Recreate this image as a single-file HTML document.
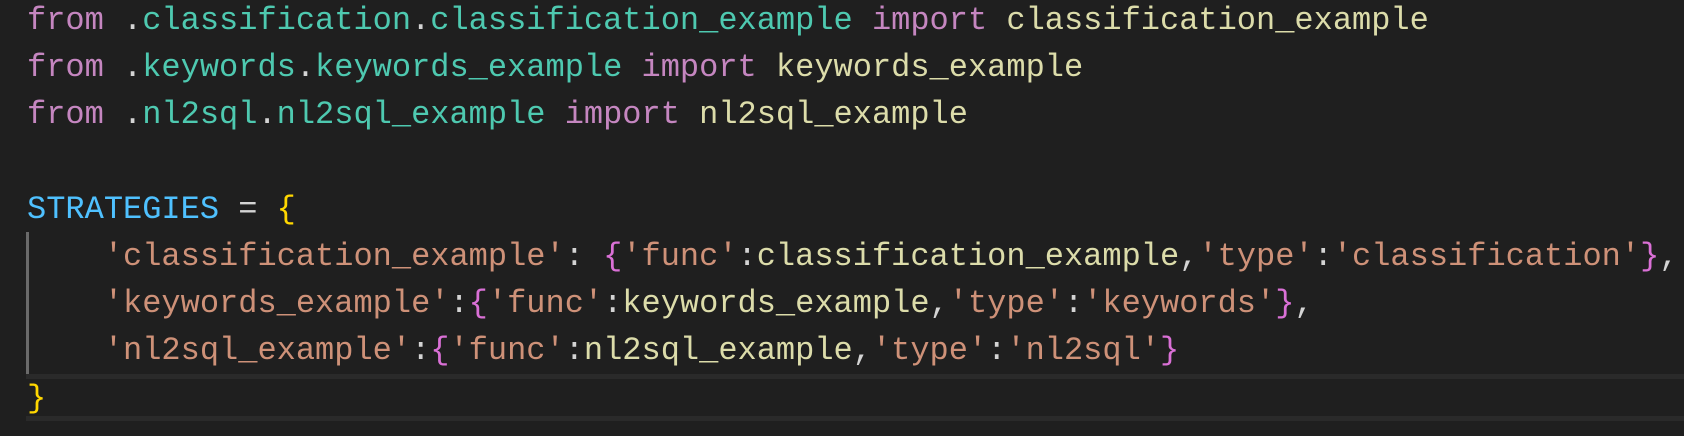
<!DOCTYPE html>
<html><head><meta charset="utf-8"><style>
html,body{margin:0;padding:0;background:#1f1f1f;width:1684px;height:436px;overflow:hidden}
.ed{position:relative;width:1684px;height:436px;font-family:"Liberation Mono",monospace;font-size:32px;letter-spacing:0}
.l{position:absolute;left:27px;height:47px;line-height:47px;white-space:pre;color:#d4d4d4}
.k{color:#c586c0}.m{color:#4ec9b0}.f{color:#dcdcaa}.c{color:#4fc1ff}.s{color:#ce9178}.y{color:#ffd700}.p{color:#da70d6}
.cur{position:absolute;left:26px;right:0;top:374px;height:37px;border-top:5px solid #2a2a2a;border-bottom:5px solid #2a2a2a}
.guide{position:absolute;left:26px;width:3px;top:232px;height:142px;background:#6a6a6a}
</style></head><body><div class="ed">
<div class="cur"></div>
<div class="guide"></div>
<div class="l" style="top:-3px"><span class="k">from</span> .<span class="m">classification</span>.<span class="m">classification_example</span> <span class="k">import</span> <span class="f">classification_example</span></div>
<div class="l" style="top:44.2px"><span class="k">from</span> .<span class="m">keywords</span>.<span class="m">keywords_example</span> <span class="k">import</span> <span class="f">keywords_example</span></div>
<div class="l" style="top:91.4px"><span class="k">from</span> .<span class="m">nl2sql</span>.<span class="m">nl2sql_example</span> <span class="k">import</span> <span class="f">nl2sql_example</span></div>
<div class="l" style="top:185.8px"><span class="c">STRATEGIES</span> = <span class="y">{</span></div>
<div class="l" style="top:233px">    <span class="s">'classification_example'</span>: <span class="p">{</span><span class="s">'func'</span>:<span class="f">classification_example</span>,<span class="s">'type'</span>:<span class="s">'classification'</span><span class="p">}</span>,</div>
<div class="l" style="top:280.2px">    <span class="s">'keywords_example'</span>:<span class="p">{</span><span class="s">'func'</span>:<span class="f">keywords_example</span>,<span class="s">'type'</span>:<span class="s">'keywords'</span><span class="p">}</span>,</div>
<div class="l" style="top:327.4px">    <span class="s">'nl2sql_example'</span>:<span class="p">{</span><span class="s">'func'</span>:<span class="f">nl2sql_example</span>,<span class="s">'type'</span>:<span class="s">'nl2sql'</span><span class="p">}</span></div>
<div class="l" style="top:374.6px"><span class="y">}</span></div>
</div></body></html>
